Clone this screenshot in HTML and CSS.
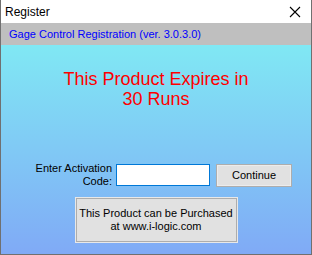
FILE: index.html
```html
<!DOCTYPE html>
<html lang="en">
<head>
    <meta charset="UTF-8">
    <title>Register</title>
    <link rel="stylesheet" href="styles.css">
</head>
<body>
    <div class="window">
        <div class="titlebar">
            <span class="title">Register</span>
            <svg class="close" width="12" height="12" viewBox="0 0 12 12">
                <path d="M1 1 L11 11 M11 1 L1 11" stroke="#000" stroke-width="1.1" fill="none"/>
            </svg>
        </div>
        <div class="band">Gage Control Registration (ver. 3.0.3.0)</div>
        <div class="main">
            <div class="expires">This Product Expires in<br>30 Runs</div>
            <form class="activation" id="activationForm">
                <label class="code-label" for="code">Enter Activation<br>Code:</label>
                <input type="text" id="code" class="code-input">
                <button type="submit" class="btn">Continue</button>
            </form>
            <div class="purchase">This Product can be Purchased<br>at www.i-logic.com</div>
        </div>
    </div>
</body>
</html>
```

FILE: styles.css
```css
* {
    box-sizing: border-box;
    margin: 0;
    padding: 0;
}

body {
    font-family: 'Liberation Sans', Arial, sans-serif;
    background: #ffffff;
}

.window {
    width: 312px;
    height: 255px;
    display: flex;
    flex-direction: column;
    border: 1px solid #707070;
    border-top: none;
}

.titlebar {
    height: 23px;
    display: flex;
    align-items: center;
    justify-content: space-between;
    padding: 1px 10px 0 4px;
    background: #ffffff;
    font-size: 12px;
    color: #000000;
}

.band {
    height: 22px;
    background: #bfbfbf;
    color: #0000ff;
    font-size: 11px;
    line-height: 22px;
    padding-left: 8px;
}

.main {
    flex: 1;
    background: linear-gradient(to bottom, #80e8f4, #80aaf6);
    display: flex;
    flex-direction: column;
    align-items: center;
    padding-top: 24px;
}

.expires {
    color: #ff0000;
    font-size: 18px;
    line-height: 20px;
    text-align: center;
}

.activation {
    display: flex;
    align-items: center;
    align-self: flex-start;
    margin-top: 53px;
    padding-left: 34px;
}

.code-label {
    width: 77px;
    text-align: right;
    font-size: 11px;
    line-height: 13px;
    color: #000000;
    margin-right: 4px;
}

.code-input {
    width: 94px;
    height: 22px;
    border: 1px solid #0078d7;
    background: #ffffff;
    margin-right: 6px;
}

.btn {
    width: 76px;
    height: 23px;
    background: #e1e1e1;
    border: 1px solid #adadad;
    box-shadow: inset 0 0 0 1px #ececec;
    font-family: inherit;
    font-size: 11px;
    color: #000000;
}

.purchase {
    margin-top: 10px;
    width: 161px;
    height: 44px;
    display: flex;
    align-items: center;
    justify-content: center;
    text-align: center;
    white-space: nowrap;
    background: #e1e1e1;
    border: 1px solid #adadad;
    box-shadow: 0 0 0 1px #e8e8e8;
    font-size: 11px;
    line-height: 13px;
    color: #000000;
}
```
